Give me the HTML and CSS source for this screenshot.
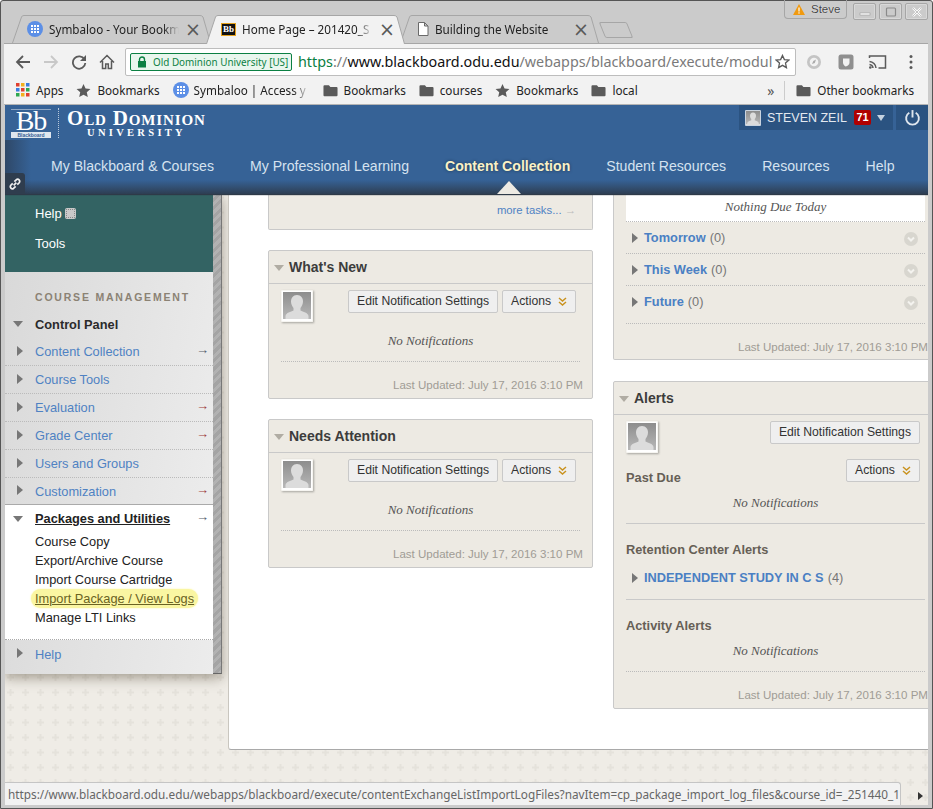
FILE: index.html
```html
<!DOCTYPE html>
<html lang="en">
<head>
<meta charset="utf-8">
<title>Home Page</title>
<link rel="stylesheet" href="styles.css">
</head>
<body>
<svg class="defs" width="0" height="0" aria-hidden="true">
  <symbol id="sym" viewBox="0 0 16 16"><circle cx="8" cy="8" r="8" fill="#5c8fe6"/><g fill="#fff"><rect x="4" y="4" width="2" height="2"/><rect x="7" y="4" width="2" height="2"/><rect x="10" y="4" width="2" height="2"/><rect x="4" y="7" width="2" height="2"/><rect x="7" y="7" width="2" height="2"/><rect x="10" y="7" width="2" height="2"/><rect x="4" y="10" width="2" height="2"/><rect x="7" y="10" width="2" height="2"/><rect x="10" y="10" width="2" height="2"/></g></symbol>
  <symbol id="star" viewBox="0 0 16 16"><path d="M8 1l2.200 4.800 5.200.6-3.900 3.500 1.100 5.100L8 12.400 3.400 15l1.100-5.100L.6 6.400l5.200-.6z" fill="#5a5a5a"/></symbol>
  <symbol id="folder" viewBox="0 0 16 14"><path d="M1.500 1.500h4.800l1.600 1.700h6.600c.6 0 1 .4 1 1v7.800c0 .6-.4 1-1 1H1.500c-.6 0-1-.4-1-1V2.500c0-.6.4-1 1-1z" fill="#5a5a5a"/></symbol>
  <symbol id="avatar" viewBox="0 0 32 32"><rect x="0.500" y="0.500" width="31" height="31" fill="#fff"/><defs><linearGradient id="ag" x1="0" y1="0" x2="0" y2="1"><stop offset="0" stop-color="#8d8d8d"/><stop offset="1" stop-color="#b8b8b8"/></linearGradient></defs><rect x="2" y="2" width="28" height="27" fill="url(#ag)"/><path d="M16 5c-4 0-6 3-6 6.500 0 3 1.400 5 2.500 6.500v2.500c-2.500 1.500-7.500 2-8 5.500v3h23v-3c-.5-3.500-5.500-4-8-5.500V18c1.100-1.500 2.500-3.500 2.500-6.500C22 8 20 5 16 5z" fill="#dcdcdc"/></symbol>
  <symbol id="chev" viewBox="0 0 14 14"><circle cx="7" cy="7" r="7" fill="#d8d6cf"/><path d="M4 5.500l3 3 3-3" fill="none" stroke="#f4f3ef" stroke-width="2"/></symbol>
  <symbol id="dbl" viewBox="0 0 9 9"><path d="M1 1l3.500 3L8 1M1 5l3.500 3L8 5" fill="none" stroke="#c9921f" stroke-width="1.500"/></symbol>
</svg>
<div class="window">
  <div class="tabstrip">
    <div class="tab">
      <svg class="ico16"><use href="#sym"/></svg>
      <span class="tab-title">Symbaloo - Your Bookm</span>
      <span class="tab-x">×</span>
    </div>
    <div class="tab tab-active">
      <span class="bbfav">Bb</span>
      <span class="tab-title">Home Page – 201420_S</span>
      <span class="tab-x">×</span>
    </div>
    <div class="tab">
      <svg class="ico16 tab-doc" viewBox="0 0 16 16"><path d="M3.500 1.500h6l3.500 3.500v9.500h-9.500z M9.500 1.500v3.500h3.500" fill="#fff" stroke="#6a6a6a"/></svg>
      <span class="tab-title">Building the Website</span>
      <span class="tab-x">×</span>
    </div>
    <div class="newtab"></div>
    <div class="wm">
      <div class="wm-user">
        <svg class="wm-warn" viewBox="0 0 12 11"><path d="M6 0l6 11H0z" fill="#f09a10"/><rect x="5.400" y="3.500" width="1.200" height="4" fill="#fff"/><rect x="5.400" y="8.300" width="1.200" height="1.300" fill="#fff"/></svg>
        <span>Steve</span>
      </div>
      <div class="wm-btn"><svg viewBox="0 0 12 12" class="wm-ico"><rect x="1" y="7" width="10" height="2" fill="#fff" stroke="#9a9a9a" stroke-width=".6"/></svg></div>
      <div class="wm-btn"><svg viewBox="0 0 12 12" class="wm-ico"><rect x="1.500" y="2" width="9" height="8" rx="1" fill="none" stroke="#8a8a8a" stroke-width="1.200"/></svg></div>
      <div class="wm-btn"><svg viewBox="0 0 12 12" class="wm-ico"><path d="M2 2l8 8M10 2l-8 8" stroke="#fff" stroke-width="2.200"/><path d="M2 2l8 8M10 2l-8 8" stroke="#999" stroke-width=".6"/></svg></div>
    </div>
  </div>

  <div class="toolbar">
    <svg class="navico" viewBox="0 0 16 16"><path d="M15 8H2.500M8 2L2 8l6 6" fill="none" stroke="#5a5a5a" stroke-width="1.800"/></svg>
    <svg class="navico" viewBox="0 0 16 16"><path d="M1 8h12.500M8 2l6 6-6 6" fill="none" stroke="#c8c8c8" stroke-width="1.800"/></svg>
    <svg class="navico" viewBox="0 0 16 16"><path d="M13.500 5.500A6.200 6.200 0 1 0 14.300 9" fill="none" stroke="#5a5a5a" stroke-width="1.800"/><path d="M15 1v6H9z" fill="#5a5a5a"/></svg>
    <svg class="navico" viewBox="0 0 16 16"><path d="M1 8.500L8 1.500l7 7M3.500 7v7.500h3.200v-4.500h2.600v4.500h3.200V7" fill="none" stroke="#5a5a5a" stroke-width="1.500"/></svg>
    <div class="omni">
      <div class="ev">
        <svg class="lock" viewBox="0 0 10 12"><path d="M2.500 5V3.500a2.500 2.500 0 0 1 5 0V5" fill="none" stroke="#0b8043" stroke-width="1.400"/><rect x="1" y="5" width="8" height="6.500" fill="#0b8043"/></svg>
        <span>Old Dominion University [US]</span>
      </div>
      <div class="url"><span class="url-s">https</span><span class="url-g">://</span><span class="url-d">www.blackboard.odu.edu</span><span class="url-g">/webapps/blackboard/execute/modul</span></div>
      <svg class="omni-star" viewBox="0 0 16 16"><path d="M8 1.500l2 4.500 4.800.5-3.600 3.200 1 4.800L8 12.100l-4.200 2.400 1-4.800L1.200 6.500 6 6z" fill="none" stroke="#5a5a5a" stroke-width="1.400"/></svg>
    </div>
    <div class="exts">
      <svg class="ext" viewBox="0 0 16 16"><circle cx="8" cy="8" r="7" fill="#c4c4c4"/><circle cx="8" cy="8" r="4.300" fill="#f2f2f2"/><path d="M6 10l1.300-3L10 5.500 8.800 9z" fill="#aaa"/></svg>
      <svg class="ext" viewBox="0 0 16 16"><rect x="0.500" y="0.500" width="15" height="15" rx="2.500" fill="#8f8f8f"/><path d="M5 4.500h6.500v4c0 2-1.500 3.500-4 4-1.500-.7-2.500-2.500-2.500-4z" fill="#f2f2f2"/></svg>
      <svg class="ext ext-cast" viewBox="0 0 18 16"><path d="M1 4V2h16v12h-7" fill="none" stroke="#5a5a5a" stroke-width="1.500"/><path d="M1 7.500a7 7 0 0 1 6.500 6.500M1 10.500a4 4 0 0 1 3.500 3.500" fill="none" stroke="#5a5a5a" stroke-width="1.500"/><circle cx="1.800" cy="13.500" r="1.300" fill="#5a5a5a"/></svg>
      <svg class="ext ext-menu" viewBox="0 0 4 16"><circle cx="2" cy="2.500" r="1.500" fill="#5a5a5a"/><circle cx="2" cy="8" r="1.500" fill="#5a5a5a"/><circle cx="2" cy="13.500" r="1.500" fill="#5a5a5a"/></svg>
    </div>
  </div>

  <div class="bookmarks">
    <div class="bm"><svg class="ico14" viewBox="0 0 14 14"><rect width="3.500" height="3.500" fill="#e0402f"/><rect x="5" width="3.500" height="3.500" fill="#f2b01e"/><rect x="10" width="3.500" height="3.500" fill="#3a7de0"/><rect y="5" width="3.500" height="3.500" fill="#3a7de0"/><rect x="5" y="5" width="3.500" height="3.500" fill="#e0402f"/><rect x="10" y="5" width="3.500" height="3.500" fill="#2fa84f"/><rect y="10" width="3.500" height="3.500" fill="#2fa84f"/><rect x="5" y="10" width="3.500" height="3.500" fill="#f2b01e"/><rect x="10" y="10" width="3.500" height="3.500" fill="#e0402f"/></svg><span>Apps</span></div>
    <div class="bm"><svg class="ico15"><use href="#star"/></svg><span>Bookmarks</span></div>
    <div class="bm bm-sym"><svg class="ico16"><use href="#sym"/></svg><span class="bm-fade">Symbaloo | Access y</span></div>
    <div class="bm"><svg class="ico15"><use href="#folder"/></svg><span>Bookmarks</span></div>
    <div class="bm"><svg class="ico15"><use href="#folder"/></svg><span>courses</span></div>
    <div class="bm"><svg class="ico15"><use href="#star"/></svg><span>Bookmarks</span></div>
    <div class="bm"><svg class="ico15"><use href="#folder"/></svg><span>local</span></div>
    <div class="bm-more">»</div>
    <div class="bm bm-other"><svg class="ico15"><use href="#folder"/></svg><span>Other bookmarks</span></div>
  </div>

  <div class="page">
    <header class="bbhead">
      <div class="bbtop">
        <div class="logo-bb"><span class="logo-letters">Bb</span><span class="logo-small">Blackboard</span></div>
        <div class="logo-uni">
          <div class="logo-old">Old Dominion</div>
          <div class="logo-univ">UNIVERSITY</div>
        </div>
        <div class="user">
          <svg class="user-pic"><use href="#avatar"/></svg>
          <span class="user-name">STEVEN ZEIL</span>
          <span class="badge">71</span>
          <span class="caret"></span>
        </div>
        <div class="power"><svg viewBox="0 0 16 16"><path d="M5 3.500a6 6 0 1 0 6 0" fill="none" stroke="#dfe6ee" stroke-width="1.800"/><path d="M8 1v7" stroke="#dfe6ee" stroke-width="1.800"/></svg></div>
      </div>
      <nav class="bbnav">
        <a>My Blackboard &amp; Courses</a>
        <a>My Professional Learning</a>
        <a class="nav-on">Content Collection</a>
        <a>Student Resources</a>
        <a>Resources</a>
        <a>Help</a>
      </nav>
      <div class="linkbtn"><svg viewBox="0 0 12 12"><path d="M5 7l2-2M4.300 5.500L2.700 7.100a1.600 1.600 0 0 0 2.200 2.200l1.600-1.600M7.700 6.500l1.600-1.600a1.600 1.600 0 0 0-2.200-2.200L5.500 4.300" fill="none" stroke="#f0f0f0" stroke-width="1.300"/></svg></div>
    </header>

    <div class="body">
      <aside class="sidebar">
        <div class="side-main">
          <div class="teal">
            <div class="teal-row">Help<span class="teal-ico"></span></div>
            <div class="teal-row">Tools</div>
          </div>
          <div class="cm">
            <div class="cm-title">COURSE MANAGEMENT</div>
            <div class="cp"><span class="tri-down"></span>Control Panel</div>
            <div class="cm-row"><span class="tri-right"></span><a>Content Collection</a><span class="arrow">→</span></div>
            <div class="cm-row"><span class="tri-right"></span><a>Course Tools</a></div>
            <div class="cm-row"><span class="tri-right"></span><a>Evaluation</a><span class="arrow arrow-red">→</span></div>
            <div class="cm-row"><span class="tri-right"></span><a>Grade Center</a><span class="arrow arrow-red">→</span></div>
            <div class="cm-row"><span class="tri-right"></span><a>Users and Groups</a></div>
            <div class="cm-row cm-row-last"><span class="tri-right"></span><a>Customization</a><span class="arrow arrow-red">→</span></div>
          </div>
          <div class="pk">
            <div class="pk-head"><span class="tri-down"></span><span class="pk-title">Packages and Utilities</span><span class="arrow">→</span></div>
            <ul class="pk-list">
              <li>Course Copy</li>
              <li>Export/Archive Course</li>
              <li>Import Course Cartridge</li>
              <li><span class="hl">Import Package / View Logs</span></li>
              <li>Manage LTI Links</li>
            </ul>
          </div>
          <div class="side-help"><span class="tri-right"></span><a>Help</a></div>
        </div>
        <div class="side-strip"></div>
      </aside>

      <main class="panel">
        <div class="col">
          <section class="mod mod-stub1">
            <div class="stub-line"></div>
            <div class="more">more tasks... <span class="more-arrow">→</span></div>
          </section>
          <section class="mod">
            <h2 class="mod-h"><span class="tri-h"></span>What's New</h2>
            <div class="mod-b">
              <div class="tools">
                <svg class="pic"><use href="#avatar"/></svg>
                <button class="btn">Edit Notification Settings</button>
                <button class="btn btn-act">Actions<svg class="dbl"><use href="#dbl"/></svg></button>
              </div>
              <p class="none">No Notifications</p>
              <div class="dots"></div>
              <p class="upd">Last Updated: July 17, 2016 3:10 PM</p>
            </div>
          </section>
          <section class="mod">
            <h2 class="mod-h"><span class="tri-h"></span>Needs Attention</h2>
            <div class="mod-b">
              <div class="tools">
                <svg class="pic"><use href="#avatar"/></svg>
                <button class="btn">Edit Notification Settings</button>
                <button class="btn btn-act">Actions<svg class="dbl"><use href="#dbl"/></svg></button>
              </div>
              <p class="none">No Notifications</p>
              <div class="dots"></div>
              <p class="upd">Last Updated: July 17, 2016 3:10 PM</p>
            </div>
          </section>
        </div>
        <div class="col">
          <section class="mod mod-stub2">
            <div class="today">Nothing Due Today</div>
            <div class="due"><span class="tri-right"></span><a>Tomorrow</a><span class="cnt">(0)</span><svg class="chev"><use href="#chev"/></svg></div>
            <div class="due"><span class="tri-right"></span><a>This Week</a><span class="cnt">(0)</span><svg class="chev"><use href="#chev"/></svg></div>
            <div class="due due-tall"><span class="tri-right"></span><a>Future</a><span class="cnt">(0)</span><svg class="chev"><use href="#chev"/></svg></div>
            <p class="upd">Last Updated: July 17, 2016 3:10 PM</p>
          </section>
          <section class="mod">
            <h2 class="mod-h"><span class="tri-h"></span>Alerts</h2>
            <div class="mod-b">
              <div class="tools tools-alert">
                <svg class="pic"><use href="#avatar"/></svg>
                <div class="tools-stack">
                  <button class="btn">Edit Notification Settings</button>
                  <button class="btn btn-act">Actions<svg class="dbl"><use href="#dbl"/></svg></button>
                </div>
              </div>
              <h3 class="sub sub-past">Past Due</h3>
              <p class="none none-sub">No Notifications</p>
              <div class="rule"></div>
              <h3 class="sub sub-ret">Retention Center Alerts</h3>
              <div class="course"><span class="tri-right"></span><a>INDEPENDENT STUDY IN C S</a><span class="cnt">(4)</span></div>
              <div class="rule"></div>
              <h3 class="sub sub-ret">Activity Alerts</h3>
              <p class="none none-sub">No Notifications</p>
              <div class="dots"></div>
              <p class="upd">Last Updated: July 17, 2016 3:10 PM</p>
            </div>
          </section>
        </div>
      </main>
    </div>

    <div class="status">https://www.blackboard.odu.edu/webapps/blackboard/execute/contentExchangeListImportLogFiles?navItem=cp_package_import_log_files&amp;course_id=_251440_1</div>
    <div class="hscroll"></div>
  </div>
</div>
</body>
</html>
```

FILE: styles.css
```css
* { box-sizing: border-box; }
html, body { margin: 0; padding: 0; height: 100%; overflow: hidden; }
body { background: #fff; font-family: "Liberation Sans", Arial, sans-serif; }
.defs { position: absolute; }
svg { display: block; flex: none; }
p, h2, h3, ul { margin: 0; padding: 0; }
ul { list-style: none; }

.window {
  width: 933px; height: 809px; background: #cbcbcb;
  border: 1px solid #555; border-radius: 3px 3px 0 0;
  padding: 0 4px 3px 3px;
  display: flex; flex-direction: column;
}

/* tabs */
.tabstrip { height: 42px; display: flex; align-items: flex-end; padding-left: 14px; position: relative; z-index: 1; flex: none; font-family: "Noto Sans", sans-serif; }
.tab {
  width: 189px; height: 28px; margin-right: 5px; display: flex; align-items: center; gap: 6px;
  padding: 0 6px 0 9px; position: relative; font-size: 11.700px; color: #222;
}
.tab::before {
  content: ""; position: absolute; inset: 0 -4px 0 -6px; z-index: 0;
  background: url("data:image/svg+xml,%3Csvg xmlns='http://www.w3.org/2000/svg' viewBox='0 0 199 28' preserveAspectRatio='none'%3E%3Cpath d='M.5 28L9.500 2Q10 .5 12 .5H188Q190 .5 191 2L198.500 28' fill='%23cbcbcb' stroke='%23a6a6a6'/%3E%3C/svg%3E") 0 0 / 100% 100% no-repeat;
}
.tab > * { position: relative; z-index: 1; }
.tab-active { z-index: 2; }
.tab-active::before {
  inset: 0 -4px -1px -6px;
  background-image: url("data:image/svg+xml,%3Csvg xmlns='http://www.w3.org/2000/svg' viewBox='0 0 199 29' preserveAspectRatio='none'%3E%3Cpath d='M.5 29L9.500 2Q10 .5 12 .5H188Q190 .5 191 2L198.500 29' fill='%23f2f2f2' stroke='%23a6a6a6'/%3E%3C/svg%3E");
}
.tab-title { flex: 1; white-space: nowrap; overflow: hidden; min-width: 0; -webkit-mask-image: linear-gradient(to right, #000 88%, transparent); mask-image: linear-gradient(to right, #000 88%, transparent); }
.tab-doc { margin-right: -2px; }
.tab-x { font-size: 19px; line-height: 18px; color: #5a5a5a; font-family: "DejaVu Sans", sans-serif; }
.ico16 { width: 16px; height: 16px; }
.bbfav { width: 15px; height: 13px; background: #111; border: 1px solid #e5a11c; color: #fff; font: bold 9px/11px "Liberation Serif", serif; text-align: center; flex: none; }
.newtab { width: 28px; height: 16px; margin: 0 0 5px 2px; border: 1px solid #a6a6a6; border-radius: 2px; transform: skewX(22deg); }
.wm { position: absolute; top: 2px; right: 0; display: flex; gap: 3px; align-items: flex-start; }
.wm-user { width: 63px; height: 19px; margin-top: -3px; display: flex; align-items: center; gap: 6px; padding-left: 8px; margin-right: 3px; border: 1px solid #a6a6a6; border-top: 0; border-radius: 0 0 4px 4px; font-size: 11.500px; color: #444; text-shadow: 0 0 1px #fff; font-family: "Liberation Sans", sans-serif; }
.wm-warn { width: 12px; height: 11px; }
.wm-btn { width: 23px; height: 17px; border: 1px solid #a6a6a6; border-radius: 2px; display: flex; align-items: center; justify-content: center; box-shadow: inset 0 0 0 1px rgba(255,255,255,.25); }
.wm-ico { width: 12px; height: 12px; }

/* toolbar */
.toolbar { height: 36px; background: #f2f2f2; display: flex; align-items: center; padding-left: 11px; flex: none; position: relative; border-top: 1px solid #a6a6a6; }
.navico { width: 16px; height: 16px; margin-right: 12px; }
.omni { width: 671px; height: 28px; margin-left: -2px; background: #fff; border: 1px solid #bdbdbd; border-radius: 2px; display: flex; align-items: center; padding-left: 4px; font-family: "Noto Sans", sans-serif; }
.ev { height: 18px; width: 162px; flex: none; border: 1px solid #0b8043; border-radius: 2px; background: #e9f6ee; color: #0b8043; font-size: 9.900px; display: flex; align-items: center; gap: 6px; padding-left: 6px; white-space: nowrap; overflow: hidden; }
.lock { width: 10px; height: 12px; }
.url { font-size: 14.350px; margin-left: 6px; white-space: nowrap; width: 475px; overflow: hidden; }
.url-s { color: #0b8043; }
.url-g { color: #7a7a7a; }
.url-d { color: #111; }
.omni-star { width: 15px; height: 15px; margin-left: 2px; }
.exts { display: flex; align-items: center; margin-left: 10px; }
.ext { width: 16px; height: 16px; margin-right: 16px; }
.ext-cast { width: 19px; margin-left: -2px; margin-right: 22px; }
.ext-menu { width: 4px; margin-right: 0; }

/* bookmarks */
.bookmarks { height: 26px; padding: 0 0 3px 12px; background: #f2f2f2; display: flex; align-items: center; font: 11.700px "Noto Sans", sans-serif; color: #222; flex: none; border-bottom: 1px solid #b4b4b4; }
.bm { display: flex; align-items: center; gap: 6px; margin-right: 13px; white-space: nowrap; }
.bm-sym { gap: 5px; }
.ico14 { width: 14px; height: 14px; }
.ico15 { width: 15px; height: 15px; }
.bm-fade { width: 116px; overflow: hidden; -webkit-mask-image: linear-gradient(to right, #000 85%, transparent); mask-image: linear-gradient(to right, #000 85%, transparent); }
.bm-more { margin-left: auto; font-size: 14px; color: #555; padding-right: 5px; border-right: 1px solid #ccc; margin-right: 11px; width: 18px; }
.bm-other { margin-right: 14px; }

/* page */
.page { flex: 1; min-height: 0; position: relative; display: flex; flex-direction: column; overflow: hidden; margin-left: 1px;
  background-color: #efece6;
  background-image: url("data:image/svg+xml,%3Csvg xmlns='http://www.w3.org/2000/svg' width='15' height='15'%3E%3Cpath d='M6.500 4h2v2.500H11v2H8.500V11h-2V8.500H4v-2h2.500z' fill='%23e5e2db'/%3E%3C/svg%3E");
  background-position: -2px -5px;
}
.bbhead { height: 89px; flex: none; position: relative; z-index: 3;
  background: linear-gradient(to bottom, #366296 0, #366296 75px, #2e3e52 89px);
  box-shadow: 0 1px 1px #2e3a48;
}
.bbhead::before { content: ""; position: absolute; left: 0; top: 35px; bottom: 0; width: 26px; background: linear-gradient(to right, rgba(40,50,65,.55), rgba(40,50,65,0)); }
.bbtop { height: 26px; display: flex; align-items: flex-start; padding-left: 6px; position: relative; }
.logo-bb { width: 40px; height: 29px; margin-top: 4px; color: #fff; text-align: center; position: relative; font-family: "Liberation Serif", serif; display: flex; flex-direction: column; align-items: center; }
.logo-letters { display: block; width: 40px; height: 22px; border-top: 1px solid rgba(255,255,255,.45); font-size: 28px; line-height: 21px; letter-spacing: -1px; }
.logo-small { width: 40px; height: 6px; margin-top: 1px; font: bold 5px/6px "Liberation Sans", sans-serif; background: #dfe6ee; color: #366296; }
.logo-uni { margin-left: 7px; padding: 1px 0 0 8px; height: 30px; margin-top: 3px; border-left: 1px dotted #b8c9dc; color: #fff; font-family: "Liberation Serif", serif; text-align: center; width: 148px; }
.logo-old { font-size: 21px; line-height: 18px; font-weight: bold; font-variant: small-caps; letter-spacing: .85px; white-space: nowrap; text-align: left; }
.logo-univ { font-size: 10.500px; line-height: 11px; font-weight: bold; letter-spacing: 3.300px; }
.user { margin-left: auto; width: 154px; height: 25px; background: #2b5381; display: flex; align-items: center; padding-left: 6px; color: #e3e9f0; font-size: 12.500px; }
.user-pic { width: 16px; height: 16px; }
.user-name { margin-left: 6px; width: 87px; white-space: nowrap; }
.badge { width: 17px; height: 15px; background: #b00000; border-radius: 2px; color: #fff; font-weight: bold; font-size: 11px; line-height: 15px; text-align: center; }
.caret { margin-left: 6px; border: 4.500px solid transparent; border-top: 6px solid #c5d2e0; border-bottom: 0; }
.power { width: 32px; height: 25px; margin-left: 3px; background: #2b5381; display: flex; align-items: center; justify-content: center; }
.power svg { width: 17px; height: 17px; }
.bbnav { display: flex; gap: 36px; padding: 26px 0 0 46px; font-size: 14.100px; line-height: 18px; color: #d5e2f0; white-space: nowrap; }
.nav-on { color: #f9f1c6; font-weight: bold; position: relative; text-shadow: 0 0 3px #1e3550; }
.nav-on::after { content: ""; position: absolute; left: 52px; top: 24px; border: 12px solid transparent; border-top: 0; border-bottom: 13px solid #edeae3; }
.linkbtn { position: absolute; left: 0; bottom: 0; width: 20px; height: 21px; background: #2f3d4e; border-radius: 0 3px 0 0; display: flex; align-items: center; justify-content: center; }
.linkbtn svg { width: 16px; height: 16px; }

/* body */
.body { flex: 1; min-height: 0; display: flex; align-items: flex-start; }
.sidebar { width: 217px; flex: none; display: flex; box-shadow: 0 4px 12px rgba(70,60,40,.45); margin-right: 6px; }
.side-main { width: 208px; flex: none; }
.side-strip { width: 9px; background: repeating-linear-gradient(135deg, #b2b2b2 0 3px, #a4a4a4 3px 6px); border-right: 1px solid #777; border-bottom: 1px solid #666; }
.teal { height: 78px; background: #336363; color: #fff; font-size: 13px; padding: 4px 0 0 30px; }
.teal-row { height: 30px; display: flex; align-items: center; gap: 3px; }
.teal-ico { width: 11px; height: 11px; background: #c9c9c9; border-radius: 2px; border: 2px solid #c9c9c9; outline: 1px dotted #888; outline-offset: -2px; }
.cm { background: linear-gradient(100deg, #d9d9d9, #ececec); height: 232px; padding-top: 18px; position: relative; }
.cm-title { padding-left: 30px; font-size: 10.500px; line-height: 14px; font-weight: bold; letter-spacing: 1.800px; color: #8b8274; white-space: nowrap; }
.cp { height: 34px; display: flex; align-items: center; padding: 6px 0 0 8px; font-size: 12.800px; font-weight: bold; color: #2b2b2b; }
.cp .tri-down { margin-right: 12px; }
.tri-down { width: 0; height: 0; border: 5.500px solid transparent; border-top: 6px solid #777; border-bottom: 0; flex: none; }
.tri-right { width: 0; height: 0; border: 5.500px solid transparent; border-left: 6px solid #777; border-right: 0; flex: none; }
.cm-row { height: 28px; display: flex; align-items: center; padding: 0 4px 0 12px; font-size: 12.800px; color: #4f82c3; border-bottom: 1px dotted #bbb; }
.cm-row-last { border-bottom: 0; height: 26px; }
.cm-row .tri-right, .side-help .tri-right { margin-right: 12px; margin-top: -2px; }
.arrow { margin-left: auto; margin-top: -4px; color: #56606c; font-size: 13px; font-family: "Liberation Sans", sans-serif; }
.arrow-red { color: #a03c3c; }
.pk { background: #fff; border-top: 1px solid #aaa; border-bottom: 1px dotted #aaa; height: 136px; }
.pk-head { height: 27px; display: flex; align-items: center; padding: 0 4px 0 8px; font-size: 12.800px; font-weight: bold; color: #222; }
.pk-head .tri-down { margin-right: 12px; }
.pk-title { text-decoration: underline; }
.pk-list { padding: 0 0 0 30px; font-size: 12.800px; color: #222; }
.pk-list li { height: 19px; line-height: 19px; white-space: nowrap; }
.hl { display: inline-block; margin-left: -4px; padding: 0 4px; height: 19px; background: #faf6a2; border-radius: 10px; color: #6a6322; box-shadow: 0 0 2px #faf6a2; text-decoration: underline; }
.side-help { height: 34px; padding: 0 0 6px 12px; background: linear-gradient(100deg, #dcdcdc, #ececec); display: flex; align-items: center; font-size: 12.800px; color: #4f82c3; }

/* panel */
.panel { flex: 1; min-width: 0; height: 556px; background: #fff; border-left: 1px solid #c9c6bf; border-bottom: 1px solid #a9a9a9; border-radius: 0 0 0 3px; display: flex; gap: 20px; padding-left: 39px; overflow: hidden; }
.col { width: 325px; flex: none; display: flex; flex-direction: column; gap: 20px; }
.mod { background: #edeae3; border: 1px solid #c9c9c9; border-radius: 2px; }
.mod-stub1 { height: 36px; border-top: 0; border-radius: 0 0 2px 2px; padding: 0 12px; }
.stub-line { height: 1px; border-top: 1px dotted #bbb; }
.more { text-align: right; font-size: 11.300px; line-height: 14px; margin-top: 8px; color: #4f82c3; padding-right: 4px; }
.more-arrow { color: #bbb; }
.mod-h { height: 33px; border-bottom: 1px solid #c9c9c9; font-size: 14px; line-height: 32px; font-weight: bold; color: #3c3c3c; display: flex; align-items: center; padding-left: 5px; }
.tri-h { width: 0; height: 0; border: 5.500px solid transparent; border-top: 6px solid #b0aca3; border-bottom: 0; margin-right: 5px; margin-top: 1px; }
.mod-b { padding: 0 12px; }
.tools { display: flex; align-items: flex-start; padding: 6px 0 1px; position: relative; }
.pic { width: 32px; height: 32px; margin-right: 35px; box-shadow: 1px 1px 2px rgba(0,0,0,.3); }
.btn { height: 23px; font: 12.200px "Liberation Sans", sans-serif; color: #333; background: #efefef; border: 1px solid #c9c9c9; border-radius: 2px; padding: 0 8px 1px; display: flex; align-items: center; white-space: nowrap; }
.btn-act { margin-left: 4px; width: 74px; }
.dbl { width: 9px; height: 9px; margin-left: 7px; }
.none { text-align: center; font: italic 13px/16px "Liberation Serif", serif; color: #555; margin-top: 10px; height: 28px; }
.none-sub { margin-top: 9px; }
.dots { border-top: 1px dotted #bbb; }
.upd { text-align: right; font-size: 11.550px; line-height: 14px; color: #a09c95; margin: 16px -3px 0 0; height: 20px; white-space: nowrap; }
.mod-stub2 { height: 166px; margin-bottom: 1px; border-top: 0; padding: 0 12px; border-radius: 0 0 2px 2px; }
.today { height: 28px; background: #fff; border-bottom: 1px dotted #bbb; text-align: center; font: italic 13px/26px "Liberation Serif", serif; color: #555; }
.due { height: 32px; display: flex; align-items: center; padding: 0 7px 0 6px; border-bottom: 1px dotted #bbb; font-size: 12.800px; }
.due-tall { height: 38px; padding-bottom: 6px; }
.due a, .course a { color: #4a80c4; font-weight: bold; margin-left: 6px; }
.cnt { color: #777; margin-left: 4px; }
.chev { width: 14px; height: 14px; margin-left: auto; margin-top: 2px; }
.tools-alert { justify-content: space-between; padding-right: 5px; height: 58px; }
.tools-alert .pic { margin-right: 0; }
.tools-stack { display: flex; flex-direction: column; align-items: flex-end; gap: 15px; }
.tools-stack .btn-act { margin-left: 0; }
.sub { font-size: 12.800px; line-height: 16px; color: #665f56; font-weight: bold; }
.sub-past { margin-top: -3px; }
.rule { border-top: 1px solid #c9c9c9; }
.sub-ret { margin-top: 18px; }
.course { height: 41px; display: flex; align-items: center; padding: 0 0 2px 6px; font-size: 12.800px; }

/* status */
.status { position: absolute; left: 0; bottom: 0; width: 896px; height: 23px; background: #f2f2f2; border: 1px solid #c5c5c5; border-left: 0; border-bottom: 0; border-radius: 0 3px 0 0; color: #666; font: 11.780px/22px "Noto Sans", sans-serif; padding-left: 3px; white-space: nowrap; overflow: hidden; z-index: 4; }
.hscroll { position: absolute; right: 5px; bottom: 5px; width: 0; height: 0; border: 4px solid transparent; border-left: 5px solid #333; border-right: 0; z-index: 4; }
```
